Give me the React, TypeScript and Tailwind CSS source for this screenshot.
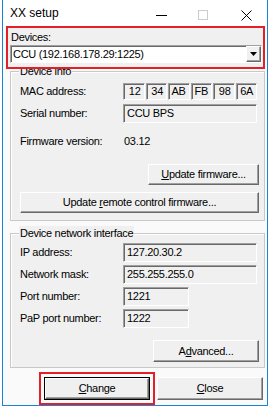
const font = { fontFamily: '"Liberation Sans", Arial, sans-serif' };

const Field = ({ value, className }: { value: string; className: string }) => (
  <div
    className={`flex items-center border border-t-[#a0a0a0] border-l-[#a0a0a0] border-b-white border-r-white bg-[#f0f0f0] shadow-[inset_1px_1px_0_#696969] ${className}`}
  >
    {value}
  </div>
);

const Button = ({ children, className }: { children: React.ReactNode; className: string }) => (
  <div
    className={`flex items-center justify-center border border-t-white border-l-white border-b-[#696969] border-r-[#696969] bg-[#f0f0f0] shadow-[inset_-1px_-1px_0_#a0a0a0] ${className}`}
  >
    {children}
  </div>
);

const Group = ({
  label,
  className,
  children,
}: {
  label: string;
  className: string;
  children: React.ReactNode;
}) => (
  <div
    className={`relative flex flex-col border border-[#c8c8c8] bg-[#f0f0f0] shadow-[inset_1px_1px_0_#fff] pl-[9px] pr-[5px] ${className}`}
  >
    <span className="absolute left-[8px] top-[-8px] bg-[#f0f0f0] px-[1px] leading-[14px]">
      {label}
    </span>
    {children}
  </div>
);

const Row = ({ label, children, className }: { label: string; children: React.ReactNode; className: string }) => (
  <div className={`flex items-center ${className}`}>
    <span className="w-[103px]">{label}</span>
    {children}
  </div>
);

export default function App() {
  const mac = ["12", "34", "AB", "FB", "98", "6A"];
  return (
    <div
      className="w-[269px] h-[410px] bg-white text-black text-[11px] tracking-[-0.3px]"
      style={font}
    >
      <div className="ml-[2px] w-[266px] h-[406px] border-l border-r border-b border-[#1883d7] bg-[#fafafa] flex flex-col">
        {/* title bar */}
        <div className="h-[26px] bg-white flex items-center relative">
          <span className="ml-[7px] text-[12px] tracking-normal">XX setup</span>
          <div className="absolute left-[153px] top-[15px] w-[11px] h-px bg-black" />
          <div className="absolute left-[195px] top-[10px] w-[10px] h-[10px] border border-[#cccccc]" />
          <svg className="absolute left-[238px] top-[10px]" width="11" height="11" viewBox="0 0 11 11">
            <path d="M0.5 0.5 L10.5 10.5 M10.5 0.5 L0.5 10.5" stroke="#000" strokeWidth="1" />
          </svg>
        </div>

        {/* devices */}
        <div className="relative z-10 ml-[3px] mr-[2px] h-[43px] border-2 border-[#e3202a] bg-[#f0f0f0] flex flex-col">
          <span className="ml-[3px] mt-[2px] leading-[14px]">Devices:</span>
          <div className="ml-[2px] mr-[1px] mt-[1px] h-[18px] flex items-center bg-white border border-t-[#a0a0a0] border-l-[#a0a0a0] border-b-white border-r-white shadow-[inset_1px_1px_0_#696969]">
            <span className="flex-1 pl-[2px] leading-[14px]">CCU (192.168.178.29:1225)</span>
            <Button className="w-[15px] h-[16px] mr-[0px]">
              <svg width="7" height="4" viewBox="0 0 7 4">
                <path d="M0 0 H7 L3.5 4 Z" fill="#000" />
              </svg>
            </Button>
          </div>
        </div>

        {/* device info */}
        <Group label="Device info" className="ml-[7px] mr-[2px] mt-[2px] h-[150px]">
          <Row label="MAC address:" className="mt-[11px] h-[17px]">
            <div className="grid grid-cols-6 gap-[1px] w-[134px]">
              {mac.map((m) => (
                <Field key={m} value={m} className="h-[17px] justify-end pr-[3px]" />
              ))}
            </div>
          </Row>
          <Row label="Serial number:" className="mt-[4px] h-[19px]">
            <Field value="CCU BPS" className="w-[134px] h-[19px] pl-[3px]" />
          </Row>
          <Row label="Firmware version:" className="mt-[9px] h-[18px]">
            <span className="pl-[1px]">03.12</span>
          </Row>
          <Button className="mt-[14px] h-[21px] w-[111px] self-end">
            <span>
              <u>U</u>pdate firmware...
            </span>
          </Button>
          <Button className="mt-[7px] h-[21px]">
            <span>
              Update <u>r</u>emote control firmware...
            </span>
          </Button>
        </Group>

        {/* network */}
        <Group label="Device network interface" className="ml-[7px] mr-[2px] mt-[12px] h-[135px]">
          <Row label="IP address:" className="mt-[9px] h-[19px]">
            <Field value="127.20.30.2" className="w-[134px] h-[19px] pl-[3px]" />
          </Row>
          <Row label="Network mask:" className="mt-[3px] h-[19px]">
            <Field value="255.255.255.0" className="w-[134px] h-[19px] pl-[3px]" />
          </Row>
          <Row label="Port number:" className="mt-[3px] h-[19px]">
            <Field value="1221" className="w-[66px] h-[19px] pl-[3px]" />
          </Row>
          <Row label="PaP port number:" className="mt-[3px] h-[19px]">
            <Field value="1222" className="w-[66px] h-[19px] pl-[3px]" />
          </Row>
          <Button className="mt-[12px] h-[22px] w-[106px] self-end">
            <span>
              A<u>d</u>vanced...
            </span>
          </Button>
        </Group>

        {/* bottom buttons */}
        <div className="flex items-start mt-[4px] ml-[36px]">
          <div className="w-[116px] h-[33px] border-2 border-[#e3202a] p-[3px]">
            <div className="h-full border border-black">
              <Button className="h-full">
                <span>
                  <u>C</u>hange
                </span>
              </Button>
            </div>
          </div>
          <Button className="ml-[2px] mt-[5px] w-[106px] h-[23px]">
            <span>
              <u>C</u>lose
            </span>
          </Button>
        </div>
      </div>
    </div>
  );
}
